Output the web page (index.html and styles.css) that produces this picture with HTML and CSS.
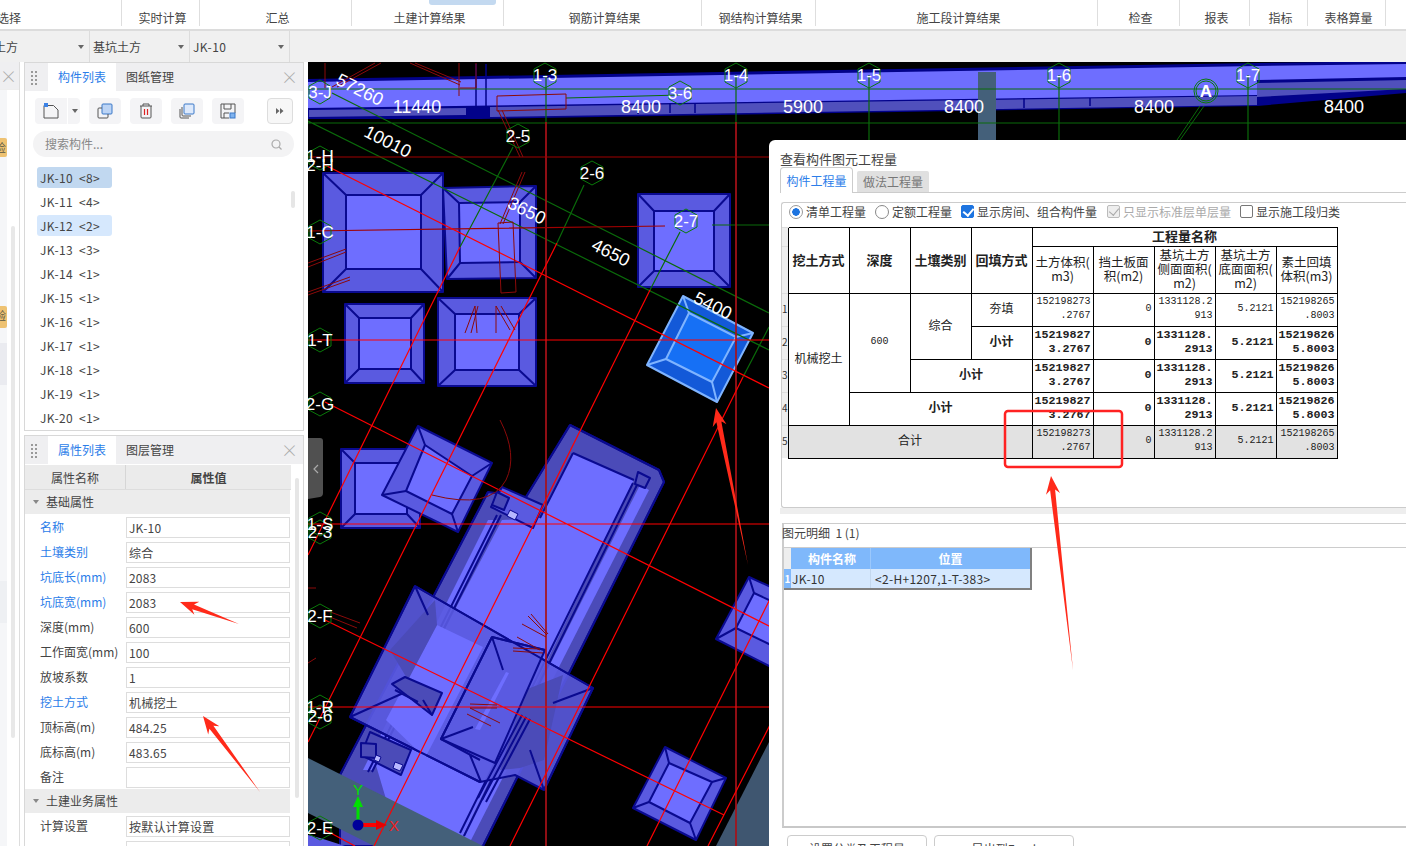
FILE: index.html
```html
<!DOCTYPE html>
<html lang="zh">
<head>
<meta charset="utf-8">
<title>查看构件图元工程量</title>
<link rel="stylesheet" href="styles.css">
</head>
<body>
<header class="topbar">
  <div class="tgroup w122 first"><span class="clip-left">选择</span></div>
  <div class="tgroup w78">实时计算</div>
  <div class="tgroup w152">汇总</div>
  <div class="tgroup w152 active-tab">土建计算结果</div>
  <div class="tgroup w198">钢筋计算结果</div>
  <div class="tgroup w114">钢结构计算结果</div>
  <div class="tgroup w282">施工段计算结果</div>
  <div class="tgroup w82">检查</div>
  <div class="tgroup w70">报表</div>
  <div class="tgroup w58">指标</div>
  <div class="tgroup w78">表格算量</div>
  <div class="tgroup w20"></div>
</header>
<div class="combobar">
  <div class="combo c-first"><span class="clip-left2">土方</span><i class="caret"></i></div>
  <div class="combo">基坑土方<i class="caret"></i></div>
  <div class="combo latin">JK-10<i class="caret"></i></div>
</div>
<div class="main">
  <aside class="strip">
    <div class="strip-head"><span class="x">×</span></div>
    <div class="strip-body">
      <div class="strip-col">
        <div class="tag t1">检</div>
        <div class="tag t2">验</div>
        <div class="blk b1"></div>
        <div class="blk b2"></div>
      </div>
      <div class="strip-scroll"></div>
    </div>
  </aside>
  <div class="panels">
    <section class="panel p-top">
      <div class="phead">
        <span class="grip"></span>
        <span class="ptab on">构件列表</span>
        <span class="ptab">图纸管理</span>
        <span class="x">×</span>
      </div>
      <div class="tools">
        <span class="tbtn wide">
          <svg width="16" height="16" viewBox="0 0 16 16" class="ic"><path d="M1 2.500H10.500L15 7V15H1Z" fill="none" stroke="#555"/><rect x="1" y="0" width="4" height="4" fill="#3b82e6"/></svg>
        </span><span class="tbtn drop"><i class="caret"></i></span>
        <span class="tbtn">
          <svg width="16" height="16" viewBox="0 0 16 16"><rect x="5" y="1" width="10" height="10" rx="1" fill="#bcd4f5" stroke="#3b78c8"/><path d="M5 5H2a1 1 0 0 0-1 1v8a1 1 0 0 0 1 1h8a1 1 0 0 0 1-1v-3" fill="none" stroke="#555"/></svg>
        </span>
        <span class="tbtn">
          <svg width="16" height="16" viewBox="0 0 16 16"><path d="M2 3H14M5 3V1H11V3M3 3V14a1 1 0 0 0 1 1h8a1 1 0 0 0 1-1V3" fill="none" stroke="#555"/><path d="M6.500 6V12M9.500 6V12" stroke="#d22" stroke-width="1.200"/></svg>
        </span>
        <span class="tbtn">
          <svg width="16" height="16" viewBox="0 0 16 16"><rect x="5" y="1" width="10" height="10" rx="1" fill="#dde9fb" stroke="#3b78c8"/><path d="M3 4v8a1 1 0 0 0 1 1h8M1 6v8a1 1 0 0 0 1 1h8" fill="none" stroke="#555"/></svg>
        </span>
        <span class="tbtn">
          <svg width="16" height="16" viewBox="0 0 16 16"><path d="M15 10V1H1V15H9" fill="none" stroke="#555"/><path d="M4 1V6H11V1M4 15V10H9" fill="none" stroke="#555"/><rect x="10" y="10" width="5" height="5" fill="#7fb2ee" stroke="#3b78c8"/></svg>
        </span>
        <span class="tbtn more">
          <svg width="8" height="8" viewBox="0 0 8 8"><path d="M0 1L3.500 4L0 7ZM4 1L7.500 4L4 7Z" fill="#666"/></svg>
        </span>
      </div>
      <div class="search">
        <span>搜索构件...</span>
        <svg width="11" height="11" viewBox="0 0 11 11"><circle cx="5" cy="5" r="4" fill="none" stroke="#aaa" stroke-width="1.200"/><path d="M8 8L10.500 10.500" stroke="#aaa" stroke-width="1.200"/></svg>
      </div>
      <div class="list">
        <div class="li sel">JK-10  &lt;8&gt;</div>
        <div class="li">JK-11  &lt;4&gt;</div>
        <div class="li hl">JK-12  &lt;2&gt;</div>
        <div class="li">JK-13  &lt;3&gt;</div>
        <div class="li">JK-14  &lt;1&gt;</div>
        <div class="li">JK-15  &lt;1&gt;</div>
        <div class="li">JK-16  &lt;1&gt;</div>
        <div class="li">JK-17  &lt;1&gt;</div>
        <div class="li">JK-18  &lt;1&gt;</div>
        <div class="li">JK-19  &lt;1&gt;</div>
        <div class="li">JK-20  &lt;1&gt;</div>
        <div class="list-scroll"></div>
      </div>
    </section>
    <section class="panel p-bot">
      <div class="phead">
        <span class="grip"></span>
        <span class="ptab on">属性列表</span>
        <span class="ptab">图层管理</span>
        <span class="x">×</span>
      </div>
      <div class="props">
        <div class="prow-head"><span class="ph1">属性名称</span><span class="ph2">属性值</span></div>
        <div class="psec"><i class="caret small"></i>基础属性</div>
        <div class="prow"><span class="lb blue">名称</span><span class="val">JK-10</span></div>
        <div class="prow"><span class="lb blue">土壤类别</span><span class="val">综合</span></div>
        <div class="prow"><span class="lb blue">坑底长(mm)</span><span class="val">2083</span></div>
        <div class="prow"><span class="lb blue">坑底宽(mm)</span><span class="val">2083</span></div>
        <div class="prow"><span class="lb">深度(mm)</span><span class="val">600</span></div>
        <div class="prow"><span class="lb">工作面宽(mm)</span><span class="val">100</span></div>
        <div class="prow"><span class="lb">放坡系数</span><span class="val">1</span></div>
        <div class="prow"><span class="lb blue">挖土方式</span><span class="val">机械挖土</span></div>
        <div class="prow"><span class="lb">顶标高(m)</span><span class="val">484.25</span></div>
        <div class="prow"><span class="lb">底标高(m)</span><span class="val">483.65</span></div>
        <div class="prow"><span class="lb">备注</span><span class="val"></span></div>
        <div class="psec"><i class="caret small"></i>土建业务属性</div>
        <div class="prow"><span class="lb">计算设置</span><span class="val">按默认计算设置</span></div>
        <div class="prow"><span class="lb"></span><span class="val"></span></div>
        <div class="prop-scroll"></div>
      </div>
    </section>
  </div>
  <div class="canvas">
    <svg class="scene" width="1098" height="784" viewBox="308 62 1098 784">
      <rect x="308" y="62" width="1098" height="784" fill="#000"/>
      <!-- beam -->
      <polygon class="navy" points="308,79 1257,63 1406,61 1406,93 1257,106 480,119 308,119"/>
      <polygon class="bright" points="308,82 1257,66 1257,95 308,108"/>
      <polygon class="bright" points="1257,66 1406,64 1406,77 1257,80"/>
      <polygon class="mid" points="1257,83 1406,80 1406,89 1257,97"/>
      <polygon class="mid" points="309,110 466,108 466,115 309,117"/>
      <polygon class="mid" points="490,107 1257,96 1257,105 490,117"/>
      <path class="navyl thin" d="M476 64V108M486 64V108M638 104V114M670 103V113M695 103V113M1024 98V108M1090 98V106"/>
      <rect class="col" x="978" y="72" width="18" height="68"/>
      <!-- axis pits -->
      <g class="pit">
        <polygon class="side" points="323,173 443,173 443,292 323,292"/><polygon class="in" points="346,195 421,195 421,269 346,269"/><path d="M323 173L346 195M443 173L421 195M443 292L421 269M323 292L346 269"/>
      </g>
      <g class="pit">
        <polygon class="side" points="443,188 536,186 536,278 447,279"/><polygon class="in" points="459,203 520,202 520,262 460,263"/><path d="M443 188L459 203M536 186L520 202M536 278L520 262M447 279L460 263"/>
      </g>
      <g class="pit">
        <polygon class="side" points="638,194 730,194 730,287 638,287"/><polygon class="in" points="654,211 714,211 714,271 654,271"/><path d="M638 194L654 211M730 194L714 211M730 287L714 271M638 287L654 271"/>
      </g>
      <g class="pit">
        <polygon class="side" points="345,304 424,304 424,383 345,383"/><polygon class="in" points="359,318 411,318 411,369 359,369"/><path d="M345 304L359 318M424 304L411 318M424 383L411 369M345 383L359 369"/>
      </g>
      <g class="pit">
        <polygon class="side" points="438,298 536,298 536,386 438,386"/><polygon class="in" points="455,314 519,314 519,370 455,370"/><path d="M438 298L455 314M536 298L519 314M536 386L519 370M438 386L455 370"/>
      </g>
      <g class="pit">
        <polygon class="side" points="341,449 420,449 420,528 341,528"/><polygon class="in" points="355,463 407,463 407,514 355,514"/><path d="M341 449L355 463M420 449L407 463M420 528L407 514M341 528L355 514"/>
      </g>
      <g class="pit">
        <polygon class="side" points="418,426 492,463 458,532 382,495"/><polygon class="in" points="425,445 472,476 452,514 406,491"/><path d="M418 426L425 445M492 463L472 476M458 532L452 514M382 495L406 491"/>
      </g>
      <g class="pit">
        <polygon class="side" points="749,577 771,587 771,667 716,639"/><polygon class="in" points="754,593 771,601 771,645 736,628"/><path d="M749 577L754 593M716 639L736 628"/>
      </g>
      <g class="pit">
        <polygon class="side" points="665,747 726,778 696,840 633,808"/><polygon class="in" points="669,763 712,782 690,823 649,802"/><path d="M665 747L669 763M726 778L712 782M696 840L690 823M633 808L649 802"/>
      </g>
      <g class="pit sel">
        <polygon class="side" points="683,296 753,333 717,402 647,365"/><polygon class="in" points="689,313 736,337 712,382 666,359"/><path d="M683 296L689 313M753 333L736 337M717 402L712 382M647 365L666 359"/>
      </g>
      <!-- long strip -->
      <g class="pit">
        <polygon class="dark" points="570,425 659,470 664,482 483,846 340,846 340,775 488,492 526,497"/>
        <polygon class="in noline" points="573,453 634,480 458,846 400,846 375,762 502,520 540,518"/>
        <polygon class="in noline" points="488,520 497,520 372,770 363,770"/>
        <polygon class="in noline" points="640,485 649,490 468,846 459,846"/>
        <path d="M570 425L659 470L664 482L483 846M526 497L570 425M340 775L488 492M573 453L634 480M573 453L540 518M633 483L460 833M637 485L464 836M501 515L372 772M497 515L368 772"/>
        <polygon class="side" points="502,487 543,505 533,528 491,507"/>
        <polygon class="dark" points="497,492 509,498 504,510 492,505"/>
        <polygon class="light" points="510,510 518,514 515,520 507,516"/>
        <polygon class="dark" points="638,472 650,478 645,488 635,484"/>
      </g>
      <!-- cross pit -->
      <g class="pit trans">
        <polygon class="side" points="415,586 593,688 544,790 515,775 480,782 350,717"/>
        <polygon class="in noline" points="437,625 483,647 425,758 386,720"/>
        <polygon class="darkfill" points="435,600 437,625 408,680 390,650"/>
        <polygon class="darkfill" points="563,675 525,690 500,770 520,768 544,760"/>
        <polygon class="side" points="492,637 545,650 495,763 441,739"/>
        <polygon class="strip-light" points="506,672 509,673 480,730 475,729"/>
        <path d="M415 586L593 688L544 790M350 717L480 782M415 586L350 717M492 637L545 650M492 637L441 739L480 760M492 637L503 670M441 739L473 727M415 586L428 615M350 717L410 690M593 688L553 703M544 790L530 750M481 782L470 755M522 715L478 798M526 717L482 800M530 719L486 802"/>
        <polygon class="dark" points="405,677 442,693 432,715 392,684"/>
        <path d="M395 690L418 702M423 700L432 715"/>
        <polygon class="dark" points="370,732 411,750 401,775 361,755"/>
        <polygon class="dark" points="361,743 376,744 376,758 361,757"/>
        <polygon class="light" points="395,762 403,765 400,771 393,768"/>
        <polygon class="light" points="376,755 381,757 379,762 374,760"/>
      </g>
      <!-- teal -->
      <polygon class="col" points="308,758 483,846 374,846 308,813"/>
      <polygon class="col2" points="716,846 769,742 769,846"/>
      <polygon class="pitless" points="308,835 320,838 345,846 308,846"/>
      <!-- green axes -->
      <path class="g" d="M308 89H1406M308 123H1406M546 75V122M736 75V122M869 75V140M1059 75V140M1248 75V140M332 93L769 313M308 121L769 350M513 147L460 247M584 185L557 243M680 232L650 290M769 327L743 377M680 95L566 98M712 225H769"/>
      <path class="g2" d="M1204 106L1180 140M1200 106L1177 140"/>
      <!-- red -->
      <path class="rd" d="M546 122V846M736 122V846" />
      <path class="rdm" d="M308 157H769M308 231L665 226"/>
      <path class="r" d="M308 340H769M308 524H769M308 707H769M325 165L769 388M325 402L771 627M325 620L724 815M325 830L355 846M460 247L308 555M557 243L308 742M650 290L374 846M743 377L510 846M771 597L647 846M771 723L708 846"/>
      <path class="rdk" d="M325 63V88M375 63L332 87M381 63L337 87M410 63L460 85M415 63L461 82M460 88H476M459 63V96M476 63V88M497 96L566 94V109L497 111ZM498 110L520 157M502 110L523 157M522 172L500 224M525 172L503 224M498 223L513 222L516 292L501 293ZM308 267L346 252M308 263L346 249M308 295L350 280M308 292L350 277M465 333L475 306L477 333M471 333L478 306M496 306V333M496 306L510 330M501 306L515 330M500 420Q518 455 506 480Q490 510 432 495M522 624L546 637M528 616L547 635M531 614L548 634M517 637L540 650M513 648L540 649M513 651L543 653M470 704L497 705M470 708L497 708M470 708L500 723M467 714L491 726M308 588H316M325 610L360 623M325 615L357 628M308 663L316 658"/>
      <!-- hexagons and labels -->
      <g class="hex">
        <polygon points="320,80 330,86 330,98 320,104 309,98 309,86"/>
        <polygon points="545,63 556,69 556,82 545,88 534,82 534,69"/>
        <polygon points="736,63 747,69 747,82 736,88 725,82 725,69"/>
        <polygon points="869,63 880,69 880,82 869,88 858,82 858,69"/>
        <polygon points="1059,63 1070,69 1070,82 1059,88 1048,82 1048,69"/>
        <polygon points="1248,63 1259,69 1259,82 1248,88 1237,82 1237,69"/>
        <polygon points="680,81 691,87 691,99 680,105 669,99 669,87"/>
        <polygon points="518,124 529,130 529,142 518,148 507,142 507,130"/>
        <polygon points="592,161 603,167 603,179 592,185 581,179 581,167"/>
        <polygon points="686,209 697,215 697,227 686,233 675,227 675,215"/>
        <polygon points="320,146 331,152 331,164 320,170 309,164 309,152"/>
        <polygon points="320,220 331,226 331,238 320,244 309,238 309,226"/>
        <polygon points="320,328 331,334 331,346 320,352 309,346 309,334"/>
        <polygon points="320,392 331,398 331,410 320,416 309,410 309,398"/>
        <polygon points="320,512 331,518 331,530 320,536 309,530 309,518"/>
        <polygon points="320,520 331,526 331,538 320,544 309,538 309,526"/>
        <polygon points="320,604 331,610 331,622 320,628 309,622 309,610"/>
        <polygon points="320,695 331,701 331,713 320,719 309,713 309,701"/>
        <polygon points="320,705 331,711 331,723 320,729 309,723 309,711"/>
        <polygon points="320,816 331,822 331,834 320,840 309,834 309,822"/>
        <circle cx="1206" cy="91" r="12"/><circle cx="1206" cy="91" r="10"/>
      </g>
      <g class="lbl">
        <text x="320" y="98">3-J</text><text x="545" y="81">1-3</text><text x="736" y="81">1-4</text><text x="869" y="81">1-5</text><text x="1059" y="81">1-6</text><text x="1248" y="81">1-7</text><text x="680" y="99">3-6</text><text x="518" y="142">2-5</text><text x="592" y="179">2-6</text><text x="686" y="227">2-7</text>
        <text x="320" y="162">1-H</text><text x="320" y="171">2-H</text><text x="320" y="238">1-C</text><text x="320" y="346">1-T</text><text x="320" y="410">2-G</text><text x="320" y="530">1-S</text><text x="320" y="538">2-3</text><text x="320" y="622">2-F</text><text x="320" y="713">1-R</text><text x="320" y="722">2-6</text><text x="320" y="834">2-E</text>
        <text class="bold" x="1206" y="97">A</text>
      </g>
      <g class="dim">
        <text x="417" y="113">11440</text><text x="641" y="113">8400</text><text x="803" y="113">5900</text><text x="964" y="113">8400</text><text x="1154" y="113">8400</text><text x="1344" y="113">8400</text>
        <text transform="translate(357 95) rotate(27)">57260</text>
        <text transform="translate(385 147) rotate(27)">10010</text>
        <text transform="translate(524 216) rotate(27)">3650</text>
        <text transform="translate(608 258) rotate(27)">4650</text>
        <text transform="translate(710 311) rotate(27)">5400</text>
      </g>
      <!-- gizmo -->
      <path class="gy" d="M358 825V800"/><polygon class="gyf" points="358,796 363,807 353,807"/>
      <path class="gx" d="M363 825H378"/><polygon class="gxf" points="387,825 376,820 376,830"/>
      <circle class="gz" cx="358" cy="825" r="5.500"/>
      <text class="gtx gty" x="358" y="795">Y</text><text class="gtx gtr" x="394" y="831">X</text>
      <!-- collapse handle -->
      <path class="handle" d="M308 438H320Q323 438 323 441V493Q323 496 320 497L308 499Z"/>
      <path class="handle-c" d="M318 465L314 469L318 473"/>
    </svg>
  </div>
</div>

<section class="dialog">
  <h2 class="dtitle">查看构件图元工程量</h2>
  <div class="dtabs"><span class="dtab on">构件工程量</span><span class="dtab">做法工程量</span></div>
  <div class="pane">
    <div class="opts">
      <label class="opt o1"><i class="radio on"></i>清单工程量</label>
      <label class="opt o2"><i class="radio"></i>定额工程量</label>
      <label class="opt o3"><i class="chk on"></i>显示房间、组合构件量</label>
      <label class="opt o4 dis"><i class="chk dis"></i>只显示标准层单层量</label>
      <label class="opt"><i class="chk"></i>显示施工段归类</label>
    </div>
    <table class="qty">
      <colgroup><col class="c-rn"><col class="c"><col class="c"><col class="c"><col class="c"><col class="c"><col class="c"><col class="c"><col class="c"><col class="c"></colgroup>
      <tr class="h1"><td class="rn"></td><th rowspan="2">挖土方式</th><th rowspan="2">深度</th><th rowspan="2">土壤类别</th><th rowspan="2">回填方式</th><th colspan="5">工程量名称</th></tr>
      <tr class="h2"><td class="rn"></td><td class="hd">土方体积(<br>m3)</td><td class="hd">挡土板面<br>积(m2)</td><td class="hd">基坑土方<br>侧面面积(<br>m2)</td><td class="hd">基坑土方<br>底面面积(<br>m2)</td><td class="hd">素土回填<br>体积(m3)</td></tr>
      <tr><td class="rn">1</td><td class="ctr" rowspan="4">机械挖土</td><td class="ctr num-c" rowspan="3">600</td><td class="ctr" rowspan="2">综合</td><td class="ctr">夯填</td><td class="n">152198273<br>.2767</td><td class="n">0</td><td class="n">1331128.2<br>913</td><td class="n">5.2121</td><td class="n">152198265<br>.8003</td></tr>
      <tr><td class="rn">2</td><td class="ctr b">小计</td><td class="n b">15219827<br>3.2767</td><td class="n b">0</td><td class="n b">1331128.<br>2913</td><td class="n b">5.2121</td><td class="n b">15219826<br>5.8003</td></tr>
      <tr><td class="rn">3</td><td class="ctr b" colspan="2">小计</td><td class="n b">15219827<br>3.2767</td><td class="n b">0</td><td class="n b">1331128.<br>2913</td><td class="n b">5.2121</td><td class="n b">15219826<br>5.8003</td></tr>
      <tr><td class="rn">4</td><td class="ctr b" colspan="3">小计</td><td class="n b">15219827<br>3.2767</td><td class="n b">0</td><td class="n b">1331128.<br>2913</td><td class="n b">5.2121</td><td class="n b">15219826<br>5.8003</td></tr>
      <tr class="total"><td class="rn">5</td><td class="ctr" colspan="4">合计</td><td class="n">152198273<br>.2767</td><td class="n">0</td><td class="n">1331128.2<br>913</td><td class="n">5.2121</td><td class="n">152198265<br>.8003</td></tr>
    </table>
  </div>
  <div class="split"></div>
  <div class="detail">
    <div class="dhead">图元明细&nbsp;&nbsp;1 (1)</div>
    <div class="grid">
      <div class="gr ghead"><span class="g0"></span><span class="g1">构件名称</span><span class="g2c">位置</span></div>
      <div class="gr grow"><span class="g0">1</span><span class="g1">JK-10</span><span class="g2c">&lt;2-H+1207,1-T-383&gt;</span></div>
    </div>
  </div>
  <div class="btns"><span class="dbtn">设置分类及工程量</span><span class="dbtn">导出到Excel</span></div>
</section>

<svg class="marks" width="1406" height="846" viewBox="0 0 1406 846">
  <polygon points="180,602 194.400,614.800 192.200,609.200 239,624 194,604.500 199.300,601.700"/>
  <polygon points="203,716 208.200,734.600 209.400,728.700 260,792 213.400,725.700 219.400,726.200"/>
  <polygon points="716,408 712.700,427 716.400,422.200 748,565 721.300,421.200 726.500,424.200"/>
  <polygon points="1051,476 1046,494.700 1050.100,490.200 1073,670 1055.100,489.600 1060,493.100"/>
  <rect class="box" x="1005" y="411" width="117" height="56" rx="3"/>
</svg>
</body>
</html>
```

FILE: styles.css
```css
* { box-sizing: border-box; }
html, body { margin: 0; padding: 0; }
body {
  width: 1406px; height: 846px; overflow: hidden; position: relative;
  display: flex; flex-direction: column; background: #fff; color: #333;
  font: 12px/1.2 "Noto Sans CJK SC", "Liberation Sans", sans-serif;
}
i { font-style: normal; display: inline-block; }

.topbar { height: 31px; flex: none; display: flex; border-bottom: 2px solid #dcdcdc; background: #fff; }
.tgroup { height: 26px; padding: 9px 0 0 4px; text-align: center; border-right: 1px solid #dedede; color: #444; position: relative; line-height: 18px; }
.tgroup.first { text-align: left; padding-left: 0; }
.clip-left { margin-left: -3px; }
.w122 { width: 122px; } .w78 { width: 78px; } .w152 { width: 152px; } .w198 { width: 198px; }
.w114 { width: 114px; } .w282 { width: 282px; } .w82 { width: 82px; } .w70 { width: 70px; }
.w58 { width: 58px; } .w20 { width: 20px; border-right: 0; }
.active-tab::before { content: ""; position: absolute; left: 77px; top: 0; width: 67px; height: 5px; background: #c3d9f0; border-radius: 0 0 3px 3px; }

.combobar { height: 31px; flex: none; display: flex; background: #f0f0f0; }
.combo { width: 100px; padding-left: 3px; border-right: 1px solid #dcdcdc; position: relative; line-height: 31px; color: #444; }
.combo.latin { letter-spacing: .4px; }
.c-first { width: 90px; padding-left: 0; }
.clip-left2 { margin-left: -6px; }
.caret { width: 0; height: 0; border: 3.500px solid transparent; border-top: 4px solid #666; border-bottom: 0; position: absolute; right: 5px; top: 14px; }

.main { flex: 1; min-height: 0; display: flex; }
.strip { width: 20px; flex: none; border-right: 1px solid #ddd; display: flex; flex-direction: column; }
.strip-head { height: 28px; background: #efeff1; border-bottom: 1px solid #eee; overflow: hidden; line-height: 28px; position: relative; }
.strip-body { flex: 1; display: flex; }
.strip-col { width: 7px; background: #f5f6f8; display: flex; flex-direction: column; }
.strip-scroll { width: 4px; height: 512px; margin: 136px 0 0 4px; background: #e8e8e8; border-radius: 2px; }
.tag { width: 7px; height: 19px; background: #eec272; border-radius: 0 2px 2px 0; overflow: hidden; font-size: 11px; line-height: 19px; text-indent: -5px; color: #554; margin-top: 48px; flex: none; }
.tag.t2 { height: 22px; margin-top: 149px; }
.blk { flex: none; width: 7px; background: #eaebf0; height: 42px; }
.blk.b1 { margin-top: 15px; }
.blk.b2 { margin-top: 196px; background: #eef0f3; }
.x { color: #aaa; font-size: 17px; font-weight: 300; line-height: 28px; }
.strip-head .x { position: absolute; left: 0; top: 0; }

.panels { width: 280px; margin: 0 4px; flex: none; display: flex; flex-direction: column; gap: 4px; min-height: 0; }
.panel { border: 1px solid #d8d8d8; background: #fff; position: relative; }
.p-top { height: 369px; flex: none; }
.p-bot { flex: 1; min-height: 0; border-bottom: 0; overflow: hidden; }
.phead { height: 28px; background: #efeff1; display: flex; align-items: stretch; line-height: 28px; color: #444; }
.grip { width: 23px; position: relative; }
.grip::before { content: ""; position: absolute; left: 6px; top: 8px; width: 2px; height: 2px; background: #999; box-shadow: 4px 0 #999, 0 4px #999, 4px 4px #999, 0 8px #999, 4px 8px #999, 0 12px #999, 4px 12px #999; }
.ptab { width: 68px; text-align: center; }
.ptab.on { background: #fff; color: #2b7de9; }
.phead .x { margin-left: auto; margin-right: 5px; }

.tools { display: flex; padding: 7px 0 0 10px; height: 33px; }
.tbtn { width: 32px; height: 26px; background: #f4f4f6; border-radius: 4px; margin-right: 9px; display: flex; align-items: center; justify-content: center; position: relative; flex: none; }
.tbtn.wide { margin-right: 1px; border-radius: 4px 0 0 4px; }
.tbtn.drop { width: 12px; border-radius: 0 4px 4px 0; margin-right: 9px; }
.tbtn.drop .caret { right: 2px; top: 11px; }
.tbtn.more { width: 26px; margin: 0 0 0 14px; border: 1px solid #ddd; background: #f7f7f7; }
.search { margin: 7px 9px 0 8px; height: 26px; border-radius: 13px; background: #f3f3f4; color: #888; padding: 0 12px 0 12px; display: flex; align-items: center; justify-content: space-between; }
.list { position: relative; padding-top: 10px; }
.li { height: 24px; line-height: 22px; margin-left: 12px; padding-left: 3px; white-space: pre; color: #444; width: 75px; border-radius: 3px; letter-spacing: .35px; }
.li.sel { background: #c1d8f0; height: 21px; margin-bottom: 3px; line-height: 21px; }
.li.hl { background: #d6e8fd; height: 21px; margin-bottom: 3px; line-height: 21px; }
.list-scroll { position: absolute; left: 266px; top: 34px; width: 4px; height: 17px; background: #e6e6e6; border-radius: 2px; }

.props { position: relative; padding-top: 1px; }
.prow-head { height: 25px; display: flex; background: #ebebeb; border-bottom: 1px solid #ddd; width: 266px; line-height: 25px; text-align: center; color: #444; }
.ph1 { width: 101px; border-right: 1px solid #d6d6d6; }
.ph2 { flex: 1; font-weight: 700; }
.psec { height: 24px; background: #ececec; width: 265px; line-height: 24px; padding-left: 21px; color: #444; position: relative; }
.caret.small { left: 8px; right: auto; top: 10px; border-top-color: #888; }
.prow { height: 25px; width: 265px; display: flex; align-items: flex-start; padding-top: 3px; color: #444; }
.lb { width: 101px; padding-left: 15px; white-space: nowrap; flex: none; align-self: center; position: relative; top: -1px; }
.blue { color: #2b7de9; }
.val { flex: 1; height: 21px; border: 1px solid #ddd; line-height: 19px; padding-left: 2px; background: #fff; letter-spacing: .2px; }
.prop-scroll { position: absolute; left: 270px; top: 14px; width: 4px; height: 320px; background: #e6e6e6; border-radius: 2px; }

.canvas { flex: 1; min-width: 0; background: #000; }
.scene { display: block; }
.navy { fill: #02028a; }
.navyl { fill: none; stroke: #02028a; }
.thin { stroke-width: 1.500; }
.bright { fill: #6e6eff; }
.mid { fill: #5050bc; }
.col { fill: #44607a; }
.col2 { fill: #3f5670; }
.pitless { fill: #5a5ae0; }
.pit polygon, .pit path { stroke: #0a0a90; stroke-width: 2; stroke-linejoin: round; fill: none; }
.pit .side { fill: #5a5ae0; }
.pit .in { fill: #6e6eff; }
.pit .dark { fill: #4b4bb8; }
.pit .darkfill { fill: #4b4bb8; stroke: none; }
.pit .light { fill: #b8b8ff; stroke-width: 1; }
.pit .noline { stroke: none; }
.pit .strip-light { fill: #6e6eff; stroke: none; }
.pit.trans .side { fill: #5a5ae0; fill-opacity: .9; }
.pit.sel polygon, .pit.sel path { stroke: #7fb4ff; }
.pit.sel .side { fill: #1359d8; }
.pit.sel .in { fill: #1670f5; }
.g { fill: none; stroke: #0a6a0a; stroke-width: 1.200; }
.g2 { fill: none; stroke: #0a6a0a; stroke-width: 1; }
.r { fill: none; stroke: #f00; stroke-width: 1.200; }
.rd { fill: none; stroke: #a81018; stroke-width: 2; opacity: .85; }
.rdm { fill: none; stroke: #a00000; stroke-width: 1.200; }
.rdk { fill: none; stroke: #8b0a0a; stroke-width: 1; }
.hex polygon, .hex circle { fill: none; stroke: #0a7a0a; stroke-width: 1; }
.lbl text { fill: #fff; font: 17px "Liberation Sans", sans-serif; text-anchor: middle; }
.lbl .bold { font-weight: 700; }
.dim text { fill: #fff; font: 18px "Liberation Sans", sans-serif; text-anchor: middle; }
.gy { stroke: #00e000; stroke-width: 3; }
.gyf { fill: #00e000; }
.gx { stroke: #f00; stroke-width: 4; }
.gxf { fill: #e80000; }
.gz { fill: #00009a; }
.gtx { font: 15px "Liberation Sans", sans-serif; text-anchor: middle; }
.gty { fill: #00e000; }
.gtr { fill: #f02020; }
.handle { fill: #505050; }
.handle-c { fill: none; stroke: #aaa; stroke-width: 1.200; }

.dialog { position: absolute; left: 769px; top: 140px; right: 0; bottom: 0; background: #fff; border-radius: 6px 0 0 0; padding: 9px 0 0 11px; }
.dtitle { margin: 0; height: 19px; font-size: 13px; font-weight: 400; line-height: 19px; color: #444; }
.dtabs { height: 25px; display: flex; align-items: flex-end; border-bottom: 1px solid #ccc; gap: 4px; }
.dtab { width: 72px; height: 21px; background: #e0e0e0; color: #777; text-align: center; line-height: 21px; border-radius: 2px 2px 0 0; }
.dtab.on { height: 26px; background: #fff; color: #2b7de9; border: 1px solid #ccc; border-bottom: 0; line-height: 26px; border-radius: 4px 4px 0 0; position: relative; top: 1px; width: 73px; }
.pane { margin: 9px 0 0 1px; height: 306px; border: 1px solid #ccc; border-right: 0; border-radius: 3px 0 0 3px; }
.opts { height: 24px; display: flex; align-items: center; padding: 0 0 6px 7px; color: #444; white-space: nowrap; }
.opt { display: flex; align-items: center; gap: 3px; }
.o1 { width: 86px; } .o2 { width: 86px; } .o3 { width: 146px; } .o4 { width: 133px; }
.dis { color: #aaa; }
.radio { width: 14px; height: 14px; border: 1px solid #888; border-radius: 50%; background: #fff; flex: none; }
.radio.on { border-color: #999; background: radial-gradient(circle, #1d74e0 0 3.500px, #fff 4px); }
.chk { width: 13px; height: 13px; border: 1px solid #777; border-radius: 2px; flex: none; position: relative; }
.chk.on { background: #1d74e0; border-color: #1d74e0; }
.chk.dis { background: #eee; border-color: #bbb; }
.chk.on::after, .chk.dis::after { content: ""; position: absolute; left: 3px; top: 0; width: 5px; height: 8px; border: solid #fff; border-width: 0 2px 2px 0; transform: rotate(40deg); }
.chk.dis::after { border-color: #aaa; border-width: 0 1px 1px 0; }

.qty { border-collapse: collapse; table-layout: fixed; width: 555px; color: #222; }
.c-rn { width: 6px; } .c { width: 61px; }
.qty th, .qty td { border: 1px solid #000; padding: 0 0 2px; overflow: hidden; }
.qty th { font-size: 13px; font-weight: 700; }
.qty tr { height: 33px; }
.qty tr.h1 { height: 18px; }
.qty tr.h2 { height: 47px; }
.qty .rn { border: 0; border-top: 1px solid #ddd; background: #eee; font-size: 10px; color: #333; text-align: left; }
.hd { text-align: center; font-size: 12.500px; line-height: 14px; white-space: nowrap; font-family: "Noto Sans CJK SC", "Liberation Mono", monospace; }
.ctr { text-align: center; }
.qty .num-c, .qty .n { font-family: "Liberation Mono", monospace; font-size: 10px; }
.qty .n { text-align: right; padding-right: 2px; line-height: 14px; white-space: nowrap; }
.qty .n.b { font-size: 11.700px; font-weight: 700; }
.qty .b { font-weight: 700; }
.total td { background: #e2e2e2; }
.total .rn { background: #eee; }

.split { height: 6px; background: #eee; margin-top: 0; }
.detail { margin: 9px 0 0 2px; height: 305px; border: 1px solid #ccc; border-right: 0; border-bottom: 2px solid #c8c8c8; border-left-width: 2px; }
.dhead { height: 24px; line-height: 18px; border-bottom: 1px solid #ccc; color: #444; margin-left: -2px; }
.grid { width: 248px; border-right: 2px solid #808080; border-bottom: 2px solid #808080; margin-top: 0; }
.gr { display: flex; }
.g0 { width: 7px; flex: none; background: #eee; }
.g1 { width: 80px; flex: none; border-right: 1px solid #c4d8ee; padding-left: 3px; }
.g2c { flex: 1; text-align: center; }
.ghead { height: 21px; line-height: 21px; color: #fff; font-weight: 700; background: #7fb8fb; }
.ghead .g1 { text-align: center; border-right-color: #9bc8fc; }
.grow { height: 19px; line-height: 19px; background: #d5e8fe; color: #333; letter-spacing: .3px; }
.grow .g0 { background: #7fb8fb; color: #fff; font-weight: 700; font-size: 10px; text-align: center; }
.grow .g1 { padding-left: 1px; }
.grow .g2c { text-align: left; padding-left: 4px; }
.btns { display: flex; gap: 7px; margin: 7px 0 0 7px; }
.dbtn { width: 140px; height: 28px; flex: none; border: 1px solid #ccc; border-radius: 4px; text-align: center; line-height: 26px; color: #444; }

.marks { position: absolute; left: 0; top: 0; pointer-events: none; }
.marks polygon { fill: #ff2a1a; }
.marks .box { fill: none; stroke: #f22; stroke-width: 2.500; }
```
